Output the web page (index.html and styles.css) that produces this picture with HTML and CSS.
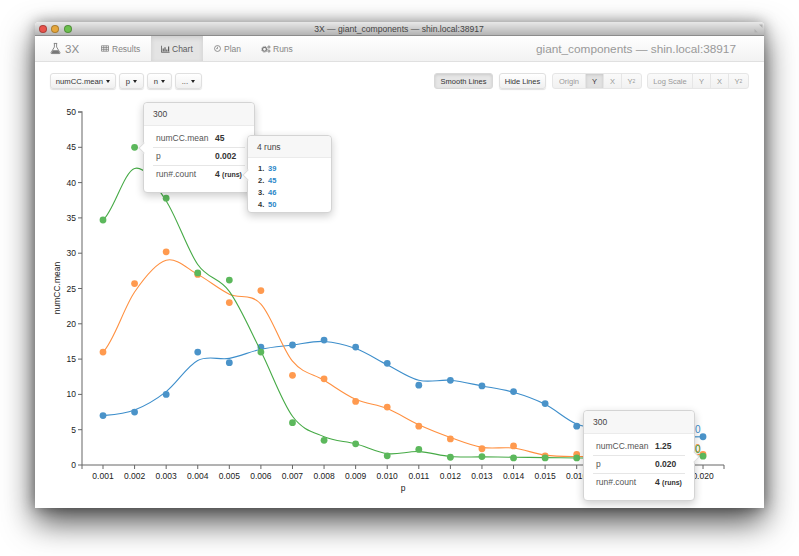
FILE: index.html
```html
<!DOCTYPE html>
<html lang="en">
<head>
  <meta charset="UTF-8"/>
  <title>3X — giant_components — shin.local:38917</title>
  <link rel="stylesheet" href="styles.css">
</head>
<body>

<div class="window">
  <div class="titlebar">
    <div class="lights"><i class="red"></i><i class="yellow"></i><i class="green"></i></div>
    <div class="title">3X — giant_components — shin.local:38917</div>
    <svg class="resize" width="9" height="9" viewBox="0 0 9 9"><path d="M5 0.500h3.500v3.500zM4 8.500h-3.500v-3.500z" fill="#b0b0b0"/></svg>
  </div>

  <nav class="navbar">
    <div class="brand">
      <svg width="11" height="13" viewBox="0 0 13 14"><path d="M4.500 1h4M5.200 1v4.200L1.200 12q-.3 1 .8 1h9q1.100 0 .8-1L7.800 5.200V1" fill="none" stroke="#777" stroke-width="1"/><path d="M3.400 9h6.200l2 3.600h-10z" fill="#777"/></svg>
      <span>3X</span>
    </div>
    <a class="tab results">
      <svg width="8" height="7" viewBox="0 0 10 9"><path d="M.5 1h9v7h-9zM.5 3.300h9M.5 5.600h9M3.400 1v7M6.600 1v7" fill="none" stroke="#777" stroke-width=".9"/></svg>
      Results
    </a>
    <a class="tab active">
      <svg width="9" height="8" viewBox="0 0 11 9"><path d="M.5.5v8h10" fill="none" stroke="#555"/><path d="M2 4h1.400v3.500H2zM4.200 2.500h1.400v5H4.200zM6.400 5h1.400v2.500H6.400zM8.600 1.500h1.400v6H8.600z" fill="#555"/></svg>
      Chart
    </a>
    <a class="tab plan">
      <svg width="7" height="7" viewBox="0 0 9 9"><circle cx="4.500" cy="4.500" r="3.800" fill="none" stroke="#777"/><path d="M4.500 2.200v2.500H2.700" fill="none" stroke="#777" stroke-width=".9"/></svg>
      Plan
    </a>
    <a class="tab runs">
      <svg width="10" height="8" viewBox="0 0 11 9"><circle cx="3.800" cy="4.800" r="2.200" fill="none" stroke="#777" stroke-width="1.300"/><circle cx="3.800" cy="4.800" r="3.300" fill="none" stroke="#777" stroke-width=".9" stroke-dasharray="1 1"/><circle cx="8.800" cy="2.300" r="1.200" fill="none" stroke="#777"/><circle cx="8.800" cy="6.800" r="1.200" fill="none" stroke="#777"/></svg>
      Runs
    </a>
    <div class="run-name">giant_components — shin.local:38917</div>
  </nav>

  <div class="toolbar">
    <div class="axis-menus">
      <button class="btn w-mean">numCC.mean <b class="caret"></b></button>
      <button class="btn w-short">p <b class="caret"></b></button>
      <button class="btn w-short">n <b class="caret"></b></button>
      <button class="btn w-more">... <b class="caret"></b></button>
    </div>
    <div class="chart-options">
      <button class="btn on w-smooth">Smooth Lines</button>
      <button class="btn w-hide">Hide Lines</button>
      <div class="btn-group origin">
        <span class="lead">Origin</span><span class="on">Y</span><span>X</span><span>Y<sub>2</sub></span>
      </div>
      <div class="btn-group logscale">
        <span class="lead">Log Scale</span><span>Y</span><span>X</span><span>Y<sub>2</sub></span>
      </div>
    </div>
  </div>

  <div class="chart">
    <svg id="plot" width="729" height="408" viewBox="0 0 729 408"></svg>

    <div class="popover pop-top">
      <h4>300</h4>
      <table>
        <tr><td>numCC.mean</td><th>45</th></tr>
        <tr><td>p</td><th>0.002</th></tr>
        <tr><td>run#.count</td><th>4 <small>(runs)</small></th></tr>
      </table>
    </div>

    <div class="popover pop-runs">
      <h4>4 runs</h4>
      <ol>
        <li><b>1.</b><a>39</a></li>
        <li><b>2.</b><a>45</a></li>
        <li><b>3.</b><a>46</a></li>
        <li><b>4.</b><a>50</a></li>
      </ol>
    </div>

    <div class="popover pop-bottom">
      <h4>300</h4>
      <table>
        <tr><td>numCC.mean</td><th>1.25</th></tr>
        <tr><td>p</td><th>0.020</th></tr>
        <tr><td>run#.count</td><th>4 <small>(runs)</small></th></tr>
      </table>
    </div>
  </div>
</div>

<script>
document.addEventListener('DOMContentLoaded', ()=> {
  const plot = document.getElementById('plot');

  // measured values (dots) and the smoothed line through them
  const series = [
    {name:'blue',
     dots:[7,7.5,10,16,14.5,16.7,17,17.7,16.7,14.4,11.3,12,11.2,10.4,8.7,5.5,5,4.6,4.2,4],
     line:[7,7.8,10.4,14.8,15.1,16.4,17,17.5,16.5,14.2,12,12,11.2,10.3,8.6,5.8,5,4.5,4,4]},
    {name:'orange',
     dots:[16,25.7,30.2,27,23,24.7,12.7,12.2,9,8.2,5.5,3.7,2.3,2.7,1.3,1.5,1.4,1.4,1.4,1.5],
     line:[16,24.5,29,27,24.2,22.8,14.7,12,9.3,8,5.7,3.9,2.5,2.4,1.4,1.2,1.3,1.4,1.4,1.5]},
    {name:'green',
     dots:[34.7,45,37.8,27.2,26.2,16,6,3.5,3,1.3,2.2,1.1,1.2,1,1,1,1,1.1,1.2,1.25],
     line:[34.7,42,37.4,28.4,24.6,16.1,6.9,4,3,1.6,1.9,1.2,1.15,1.1,1.05,1,1,1.1,1.2,1.25]}
  ];

  const X = i => 68 + i*31.58;
  const Y = v => 365 - v*7.06;
  let out = '';

  // axes
  out += '<path class="axis-y" d="M43 12H47V365"/>';
  out += '<path class="axis-x" d="M47 369V365H689V369"/>';
  for(let v=0;v<=50;v+=5){
    out += `<path class="tick" d="M43 ${Y(v)}H47"/><text class="tick-label" x="41" y="${Y(v)+3}" text-anchor="end">${v}</text>`;
  }
  for(let i=0;i<20;i++){
    const x = X(i), label = ((i+1)/1000).toFixed(3);
    out += `<path class="tick" d="M${x} 365V369"/>`;
    // 0.017 to 0.019 are fully under the lower popover
    if(i<16 || i>18) out += `<text class="tick-label" x="${x}" y="379" text-anchor="middle">${label}</text>`;
  }
  out += '<text class="axis-label" x="368" y="391" text-anchor="middle">p</text>';
  out += '<text class="axis-label" transform="translate(25 188) rotate(-90)" text-anchor="middle">numCC.mean</text>';

  // lines and dots
  series.forEach(s=>{
    let d = `M${X(0)} ${Y(s.line[0])}`;
    for(let i=0;i<s.line.length-1;i++){
      const a=s.line[Math.max(i-1,0)], b=s.line[i], c=s.line[i+1], e=s.line[Math.min(i+2,s.line.length-1)];
      d += `C${X(i)+10.5} ${Y(b+(c-a)/6)} ${X(i+1)-10.5} ${Y(c-(e-b)/6)} ${X(i+1)} ${Y(c)}`;
    }
    out += `<path class="line ${s.name}" d="${d}"/>`;
    s.dots.forEach((v,i)=>{ out += `<circle class="dot ${s.name}" cx="${X(i)}" cy="${Y(v)}" r="3.4"/>`; });
  });

  // value labels of the last points, mostly under the popover
  out += '<text class="end-label blue" x="665.500" y="333" text-anchor="end">300</text>';
  out += '<text class="end-label orange" x="665.500" y="352" text-anchor="end">300</text>';
  out += '<text class="end-label green" x="665.500" y="353" text-anchor="end">300</text>';

  plot.innerHTML = out;
});
</script>
</body>
</html>
```

FILE: styles.css
```css
*,*::before,*::after{box-sizing:border-box;margin:0;padding:0;}
body{font-family:"Liberation Sans",Arial,sans-serif;background:#fff;color:#333;padding:22px 35px;height:556px;overflow:hidden;}

.window{width:729px;height:486px;background:#fff;position:relative;border-radius:4px 4px 0 0;box-shadow:0 14px 32px rgba(0,0,0,.7),0 0 14px rgba(0,0,0,.35);}

.titlebar{height:14px;display:flex;align-items:center;position:relative;background:linear-gradient(#e8e8e8,#b4b4b4);border-bottom:1px solid #8c8c8c;border-radius:4px 4px 0 0;}
.lights{display:flex;gap:4.400px;padding-left:4px;width:60px;}
.lights i{width:8px;height:8px;border-radius:50%;border:1px solid rgba(0,0,0,.25);}
.lights .red{background:#e9534c;}
.lights .yellow{background:#e6a73c;}
.lights .green{background:#6cc04e;}
.title{position:absolute;left:0;right:0;text-align:center;font-size:8.600px;color:#444;padding-right:1px;}
.resize{position:absolute;right:1px;top:2px;}

.navbar{height:26px;display:flex;align-items:stretch;background:linear-gradient(#fff,#f2f2f2);border-bottom:1px solid #e0e0e0;font-size:8.500px;color:#858585;}
.navbar svg{flex-shrink:0;}
.brand{width:58px;display:flex;align-items:center;gap:4px;padding-left:15px;font-size:11.500px;color:#8a8a8a;}
.tab{display:flex;align-items:center;gap:3px;white-space:nowrap;}
.results{width:58px;padding-left:8px;}
.tab.active{width:52px;padding-left:10px;gap:2px;background:#e4e4e4;color:#5c5c5c;box-shadow:inset 0 2px 5px rgba(0,0,0,.1);}
.plan{width:50px;padding-left:11px;}
.runs{width:50px;padding-left:8px;gap:2px;}
.run-name{margin-left:auto;padding-right:28px;align-self:center;font-size:11.800px;color:#999;white-space:nowrap;}

.toolbar{height:38px;display:flex;justify-content:space-between;padding:11px 15px 0;}
.axis-menus,.chart-options{display:flex;gap:3px;height:16px;}
.chart-options{gap:6px;}
.btn{height:16px;font:7.700px "Liberation Sans",Arial,sans-serif;color:#333;background:linear-gradient(#fff,#f0f0f0);border:1px solid #e0e0e0;border-radius:3px;box-shadow:0 1px 1px rgba(0,0,0,.12);white-space:nowrap;}
.btn.on{background:#e6e6e6;border-color:#d8d8d8;box-shadow:inset 0 1px 3px rgba(0,0,0,.12);}
.w-mean{width:66px;}
.w-short{width:25px;}
.w-more{width:27px;}
.w-smooth{width:59px;font-size:7.500px;}
.w-hide{width:47px;font-size:7.500px;}
.caret{display:inline-block;border-top:3px solid #222;border-left:2.500px solid transparent;border-right:2.500px solid transparent;vertical-align:1px;margin-left:1px;}
.btn-group{display:flex;height:16px;font-size:7.500px;color:#999;background:linear-gradient(#fafafa,#f1f1f1);border:1px solid #e6e6e6;border-radius:3px;}
.btn-group span{display:flex;align-items:center;justify-content:center;width:18px;border-left:1px solid #e6e6e6;white-space:nowrap;}
.btn-group span:last-child{width:20px;}
.btn-group .lead{border-left:none;}
.origin{margin-right:-1px;}
.origin .lead{width:32px;}
.logscale .lead{width:44px;}
.btn-group .on{background:#e2e2e2;color:#333;box-shadow:inset 0 1px 3px rgba(0,0,0,.12);}
.btn-group sub{font-size:5px;line-height:0;vertical-align:-2px;}

.chart{position:relative;height:408px;}
#plot{display:block;}
.axis-y{fill:none;stroke:#999;stroke-width:1.500;}
.axis-x{fill:none;stroke:#666;stroke-width:1;}
.tick{fill:none;stroke:#666;stroke-width:1;}
.tick-label,.axis-label{font-size:8.500px;fill:#222;}
.line{fill:none;stroke-width:1.100;}
.line.blue{stroke:#3d8ecb;}
.line.orange{stroke:#ff9040;}
.line.green{stroke:#46aa46;}
.dot.blue{fill:#4a93c9;}
.dot.orange{fill:#ff9a4f;}
.dot.green{fill:#5cb85c;}
.end-label{font-size:10px;}
.end-label.blue{fill:#3d8ecb;}
.end-label.orange{fill:#ff9040;}
.end-label.green{fill:#46aa46;}

/* popovers sit over the plot */
.popover{position:absolute;background:#fff;border:1px solid #d4d4d4;border-radius:4px;box-shadow:0 3px 9px rgba(0,0,0,.2);font-size:8.500px;color:#555;}
.popover::before{content:"";position:absolute;width:8px;height:8px;background:#fff;transform:rotate(45deg);}
.popover h4{height:23px;line-height:22px;padding-left:9px;font-size:8.500px;font-weight:normal;color:#444;background:#f7f7f7;border-bottom:1px solid #ebebeb;border-radius:4px 4px 0 0;}
.popover table{margin:4px 0 0 9px;width:92px;border-collapse:collapse;}
.popover td,.popover th{height:17.500px;padding:0 0 1px 3px;text-align:left;border-bottom:1px solid #e6e6e6;white-space:nowrap;}
.popover tr:last-child td,.popover tr:last-child th{border-bottom:none;}
.popover th{color:#333;font-weight:bold;padding-left:0;}
.popover td{width:62px;}
.popover small{font-size:7px;}
.pop-top{left:108px;top:2px;width:112px;height:91px;}
.pop-top::before{left:-4px;top:41px;border-left:1px solid #ddd;border-bottom:1px solid #ddd;}
.pop-runs{left:212px;top:35px;width:85px;height:78px;}
.pop-runs::before{left:-4px;top:35px;border-left:1px solid #ddd;border-bottom:1px solid #ddd;}
.pop-runs h4{height:22px;}
.pop-runs ol{list-style:none;padding:4px 0 0 10px;font-size:7.500px;font-weight:bold;color:#333;}
.pop-runs li{display:flex;height:12px;align-items:center;}
.pop-runs li b{width:10px;}
.pop-runs a{color:#2a86c8;}
.pop-bottom{left:548px;top:310px;width:112px;height:91px;}
.pop-bottom::before{right:-4px;top:42px;border-right:1px solid #ddd;border-top:1px solid #ddd;}
```
